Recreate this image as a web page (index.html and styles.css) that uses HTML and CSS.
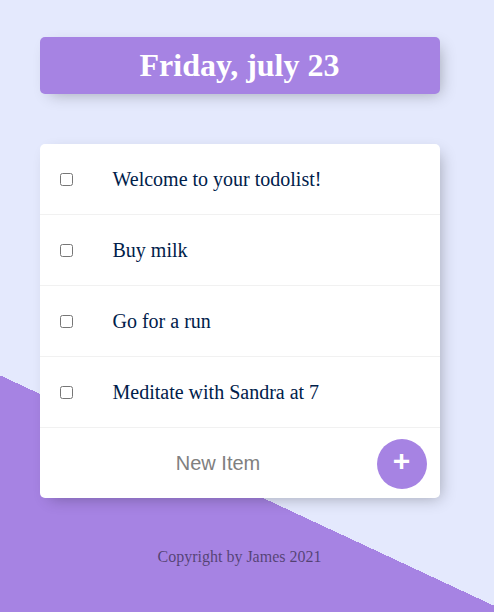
FILE: index.html
```html
<!DOCTYPE html>
<html lang="en">
<head>
<meta charset="utf-8">
<title>To-Do List</title>
<link rel="stylesheet" href="styles.css">
</head>
<body>
<div class="page">
  <div class="box heading">
    <h1>Friday, july 23</h1>
  </div>
  <div class="box list">
    <div class="item"><input type="checkbox"><p>Welcome to your todolist!</p></div>
    <div class="item"><input type="checkbox"><p>Buy milk</p></div>
    <div class="item"><input type="checkbox"><p>Go for a run</p></div>
    <div class="item"><input type="checkbox"><p>Meditate with Sandra at 7</p></div>
    <form class="item new-item" onsubmit="return false">
      <input type="text" name="newItem" placeholder="New Item" autocomplete="off">
      <button type="submit" class="add">+</button>
    </form>
  </div>
  <footer>Copyright by James 2021</footer>
</div>
</body>
</html>
```
FILE: styles.css
```css
html {
  background-color: #E4E9FD;
  background-image: linear-gradient(25deg, #A683E3 50%, #E4E9FD 50%);
  background-size: 494px 981px;
  background-repeat: no-repeat;
}

body {
  margin: 0;
  font-family: "Liberation Serif", "Times New Roman", serif;
}

.page {
  width: 479px;
  padding-top: 37px;
}

.box {
  width: 400px;
  margin: 0 auto;
  background: #fff;
  border-radius: 5px;
  box-shadow: 5px 5px 15px -5px rgba(0, 0, 0, 0.3);
}

.heading {
  background-color: #A683E3;
  text-align: center;
}

.heading h1 {
  margin: 0;
  padding: 10px;
  color: #fff;
  font-size: 32px;
  font-weight: bold;
  line-height: 37px;
}

.list {
  margin-top: 50px;
}

.item {
  min-height: 70px;
  display: flex;
  align-items: center;
  border-bottom: 1px solid #F1F1F1;
}

.item:last-child {
  border-bottom: 0;
}

.item input[type="checkbox"] {
  margin: 20px;
  width: 13px;
  height: 13px;
}

.item p {
  margin: 0;
  padding: 20px;
  font-size: 20px;
  color: #00204a;
}

.new-item {
  margin: 0 0 0 20px;
  height: 70px;
  min-height: 0;
}

.new-item input[type="text"] {
  text-align: center;
  height: 60px;
  border: none;
  background: transparent;
  font-family: "Liberation Sans", Arial, sans-serif;
  font-size: 20px;
  width: 317px;
  padding: 0;
  margin: 0;
  outline: none;
}

.new-item input::placeholder {
  color: grey;
  opacity: 1;
}

.add {
  width: 50px;
  height: 50px;
  border-radius: 50%;
  border: 0;
  background-color: #A683E3;
  color: #fff;
  font-family: "Liberation Sans", Arial, sans-serif;
  font-size: 30px;
  font-weight: bold;
  padding: 0 0 6px 0;
  margin-top: 1px;
  line-height: 1;
}

footer {
  margin-top: 50px;
  text-align: center;
  color: rgba(0, 0, 0, 0.5);
  font-size: 16px;
  line-height: 18px;
}
```
